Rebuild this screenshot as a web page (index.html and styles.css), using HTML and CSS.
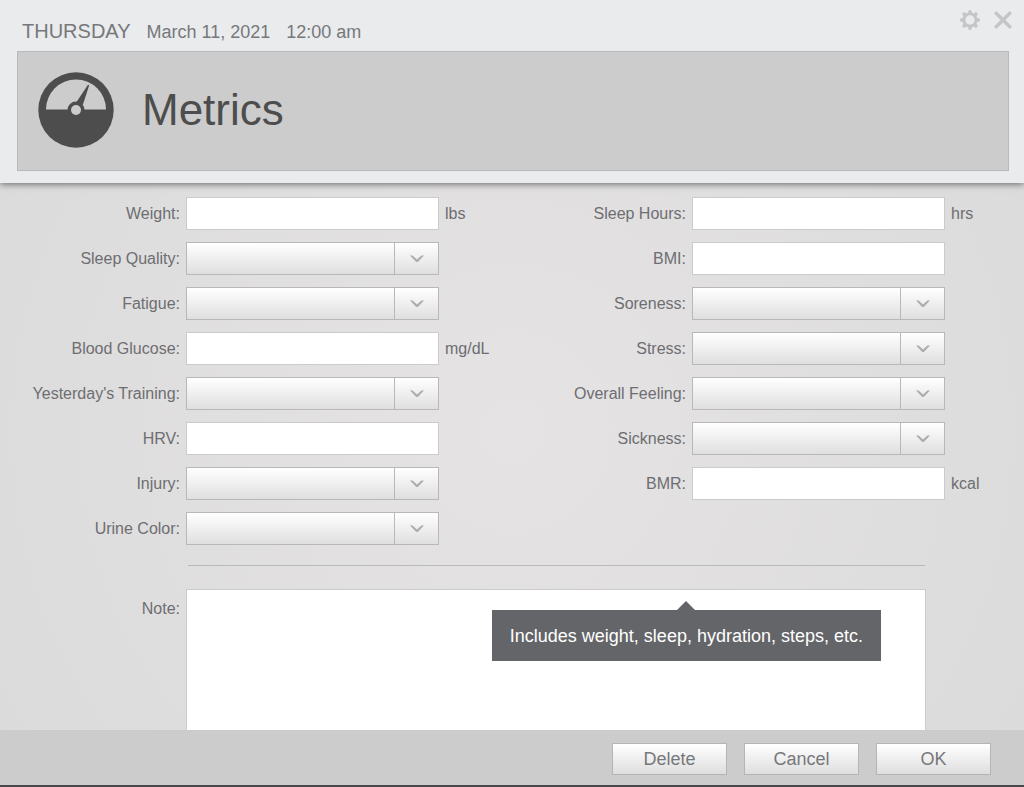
FILE: index.html
```html
<!DOCTYPE html>
<html lang="en">
<head>
  <meta charset="UTF-8" />
  <meta name="viewport" content="width=device-width, initial-scale=1.0"/>
  <title>Metrics</title>
  <link rel="stylesheet" href="styles.css">
</head>
<body>

<!-- Shared arrow for the drop-downs -->
<svg class="symbols" aria-hidden="true">
  <symbol id="chevron" viewBox="0 0 14 8">
    <path d="M0 0.5 H2.6 L7 4.6 L11.4 0.5 H14 L8.3 6.4 Q7 7.6 5.7 6.4 Z" fill="#adadae"/>
  </symbol>
</svg>

<header class="header">
  <div class="top-bar">
    <span class="day">THURSDAY</span>
    <span class="date">March 11, 2021</span>
    <span class="time">12:00 am</span>
    <div class="window-buttons">
      <button type="button" class="icon-button" aria-label="Settings">
        <svg width="20" height="20" viewBox="-10 -10 20 20">
          <g fill="#c4c5c7">
            <g id="teeth">
              <rect x="-1.7" y="-10" width="3.4" height="20" rx="1.5"/>
              <rect x="-10" y="-1.7" width="20" height="3.4" rx="1.5"/>
            </g>
            <use href="#teeth" transform="rotate(45)"/>
            <circle r="7.6"/>
          </g>
          <circle r="4.7" fill="#e9ebed"/>
        </svg>
      </button>
      <button type="button" class="icon-button" aria-label="Close">
        <svg width="18" height="18" viewBox="0 0 18 18">
          <path d="M1.2 1.2 L16.8 16.8 M16.8 1.2 L1.2 16.8" stroke="#c4c5c7" stroke-width="3.4" fill="none"/>
        </svg>
      </button>
    </div>
  </div>

  <div class="title-box">
    <svg class="gauge" width="76" height="76" viewBox="-38 -38 76 76" aria-hidden="true">
      <circle r="37.7" fill="#4d4d4d"/>
      <path d="M-30 -0.5 A30 30 0 0 1 30 -0.5 Z" fill="#cccccc"/>
      <path d="M12 -25.3 L13.2 -24.8 L6.8 -5 L0.5 -8 Z" fill="#4d4d4d"/>
      <circle r="8.5" fill="#4d4d4d"/>
      <circle r="5" fill="#cccccc"/>
    </svg>
    <h1>Metrics</h1>
  </div>
</header>

<form class="metrics-form" id="metricsForm">
  <div class="columns">
    <div class="column">
      <div class="row">
        <label for="weight">Weight:</label>
        <input type="text" id="weight" name="weight" />
        <span class="unit">lbs</span>
      </div>
      <div class="row">
        <label for="sleepQuality">Sleep Quality:</label>
        <div class="dropdown">
          <select id="sleepQuality" name="sleepQuality"><option value=""></option></select>
          <span class="arrow"><svg width="14" height="8"><use href="#chevron"/></svg></span>
        </div>
      </div>
      <div class="row">
        <label for="fatigue">Fatigue:</label>
        <div class="dropdown">
          <select id="fatigue" name="fatigue"><option value=""></option></select>
          <span class="arrow"><svg width="14" height="8"><use href="#chevron"/></svg></span>
        </div>
      </div>
      <div class="row">
        <label for="bloodGlucose">Blood Glucose:</label>
        <input type="text" id="bloodGlucose" name="bloodGlucose" />
        <span class="unit">mg/dL</span>
      </div>
      <div class="row">
        <label for="training">Yesterday's Training:</label>
        <div class="dropdown">
          <select id="training" name="training"><option value=""></option></select>
          <span class="arrow"><svg width="14" height="8"><use href="#chevron"/></svg></span>
        </div>
      </div>
      <div class="row">
        <label for="hrv">HRV:</label>
        <input type="text" id="hrv" name="hrv" />
      </div>
      <div class="row">
        <label for="injury">Injury:</label>
        <div class="dropdown">
          <select id="injury" name="injury"><option value=""></option></select>
          <span class="arrow"><svg width="14" height="8"><use href="#chevron"/></svg></span>
        </div>
      </div>
      <div class="row">
        <label for="urineColor">Urine Color:</label>
        <div class="dropdown">
          <select id="urineColor" name="urineColor"><option value=""></option></select>
          <span class="arrow"><svg width="14" height="8"><use href="#chevron"/></svg></span>
        </div>
      </div>
    </div>

    <div class="column">
      <div class="row">
        <label for="sleepHours">Sleep Hours:</label>
        <input type="text" id="sleepHours" name="sleepHours" />
        <span class="unit">hrs</span>
      </div>
      <div class="row">
        <label for="bmi">BMI:</label>
        <input type="text" id="bmi" name="bmi" />
      </div>
      <div class="row">
        <label for="soreness">Soreness:</label>
        <div class="dropdown">
          <select id="soreness" name="soreness"><option value=""></option></select>
          <span class="arrow"><svg width="14" height="8"><use href="#chevron"/></svg></span>
        </div>
      </div>
      <div class="row">
        <label for="stress">Stress:</label>
        <div class="dropdown">
          <select id="stress" name="stress"><option value=""></option></select>
          <span class="arrow"><svg width="14" height="8"><use href="#chevron"/></svg></span>
        </div>
      </div>
      <div class="row">
        <label for="overallFeeling">Overall Feeling:</label>
        <div class="dropdown">
          <select id="overallFeeling" name="overallFeeling"><option value=""></option></select>
          <span class="arrow"><svg width="14" height="8"><use href="#chevron"/></svg></span>
        </div>
      </div>
      <div class="row">
        <label for="sickness">Sickness:</label>
        <div class="dropdown">
          <select id="sickness" name="sickness"><option value=""></option></select>
          <span class="arrow"><svg width="14" height="8"><use href="#chevron"/></svg></span>
        </div>
      </div>
      <div class="row">
        <label for="bmr">BMR:</label>
        <input type="text" id="bmr" name="bmr" />
        <span class="unit">kcal</span>
      </div>
    </div>
  </div>

  <hr class="divider">

  <div class="note-row">
    <label for="note">Note:</label>
    <div class="note-box">
      <textarea id="note" name="note"></textarea>
      <div class="tooltip" role="tooltip">Includes weight, sleep, hydration, steps, etc.</div>
    </div>
  </div>
</form>

<footer class="footer">
  <button type="button" class="button">Delete</button>
  <button type="button" class="button">Cancel</button>
  <button type="submit" form="metricsForm" class="button">OK</button>
</footer>

</body>
</html>
```
FILE: styles.css
```css
* {
  box-sizing: border-box;
  margin: 0;
  padding: 0;
  font-family: "Helvetica Neue", "Liberation Sans", Arial, sans-serif;
}

body {
  display: flex;
  flex-direction: column;
  height: 100vh;
  overflow: hidden;
  background: radial-gradient(circle at 50% 55%, #e5e3e4, #dcdbdb 600px);
  color: #6d6e71;
  font-size: 16px;
}

.symbols {
  display: none;
}

/* Header */
.header {
  position: relative;
  z-index: 1;
  padding: 0 15px 12px 17px;
  background-color: #e9ebed;
  box-shadow: 0 1px 7px rgba(0, 0, 0, 0.55);
}

.top-bar {
  display: flex;
  align-items: baseline;
  gap: 16px;
  height: 51px;
  padding: 20px 0 0 5px;
  color: #77787b;
  font-size: 18px;
  line-height: 23px;
}

.day {
  font-size: 20px;
}

.window-buttons {
  display: flex;
  align-items: center;
  align-self: flex-start;
  gap: 14px;
  margin: -10px -3px 0 auto;
}

.icon-button {
  display: flex;
  border: none;
  background: none;
  cursor: pointer;
}

.title-box {
  display: flex;
  align-items: center;
  gap: 28px;
  height: 120px;
  padding: 0 20px 2px;
  border: 1px solid #b9babb;
  background-color: #cccccc;
}

h1 {
  color: #4d4d4d;
  font-size: 44px;
  font-weight: 300;
}

/* Form */
.metrics-form {
  flex: 1;
  min-height: 0;
  padding-top: 14px;
  overflow-y: auto;
  scrollbar-width: none;
}

.columns {
  display: grid;
  grid-template-columns: 1fr 1fr;
  padding-right: 12px;
}

.column {
  display: flex;
  flex-direction: column;
  gap: 12px;
}

.row {
  display: grid;
  grid-template-columns: 180px 1fr 61px;
  align-items: center;
  column-gap: 6px;
  height: 33px;
}

label {
  text-align: right;
}

input[type="text"],
textarea {
  width: 100%;
  height: 33px;
  padding: 0 8px;
  border: 1px solid #cbcbcc;
  border-radius: 0;
  background-color: white;
  color: #4d4d4d;
  font-size: 16px;
}

.dropdown {
  display: grid;
  grid-template-columns: 1fr 45px;
  height: 33px;
}

.dropdown select {
  grid-area: 1 / 1 / 2 / 3;
  width: 100%;
  padding: 0 54px 0 8px;
  appearance: none;
  border: 1px solid #b8b8b9;
  border-radius: 0;
  background: linear-gradient(#ffffff, #e0dfe0);
  color: #4d4d4d;
  font-size: 16px;
}

.arrow {
  grid-area: 1 / 2;
  display: flex;
  align-items: center;
  justify-content: center;
  border-left: 1px solid #b8b8b9;
  pointer-events: none;
}

.divider {
  height: 1px;
  margin: 20px 99px 23px 188px;
  border: none;
  background-color: #b8b9ba;
}

.note-row {
  display: grid;
  grid-template-columns: 180px 1fr;
  column-gap: 6px;
  padding-right: 98px;
}

.note-row label {
  line-height: 40px;
}

.note-box {
  position: relative;
}

textarea {
  display: block;
  height: 180px;
  padding: 8px;
  resize: none;
}

.tooltip {
  position: absolute;
  top: 21px;
  right: 45px;
  padding: 1px 18px 0;
  background-color: #646569;
  color: white;
  font-size: 18px;
  line-height: 50px;
  white-space: nowrap;
}

.tooltip::before {
  content: "";
  position: absolute;
  bottom: 100%;
  left: 50%;
  margin-left: -9px;
  border: 9px solid transparent;
  border-top: none;
  border-bottom-color: #646569;
}

/* Footer */
.footer {
  display: flex;
  align-items: flex-start;
  justify-content: flex-end;
  gap: 17px;
  height: 57px;
  padding: 13px 33px 0 0;
  border-bottom: 2px solid #47474a;
  background-color: #cccccc;
}

.button {
  width: 115px;
  height: 32px;
  border: 1px solid #b5b5b6;
  background: linear-gradient(#ffffff, #dededf);
  color: #77787b;
  font-size: 18px;
  cursor: pointer;
}
```
